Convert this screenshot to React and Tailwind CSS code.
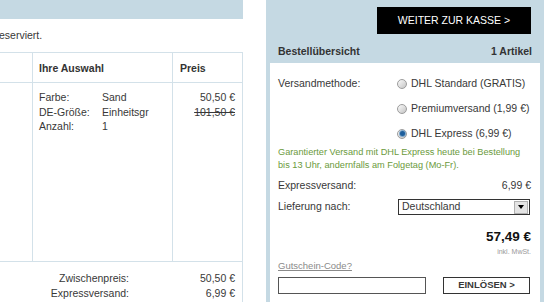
export default function App() {
  const radios = [
    { label: 'DHL Standard (GRATIS)', checked: false },
    { label: 'Premiumversand (1,99 €)', checked: false },
    { label: 'DHL Express (6,99 €)', checked: true },
  ];

  return (
    <div className="w-[550px] h-[302px] overflow-hidden flex bg-white text-[#383838] text-[10.5px] font-['Liberation_Sans',Arial,sans-serif]">
      {/* left: warenkorb */}
      <div className="w-[243px] shrink-0 flex flex-col">
        <div className="h-[19px] bg-[#c5d9e3]" />
        <p className="mt-[10px] leading-[13px] -ml-[1px]">eserviert.</p>
        <div className="mt-[10px] flex flex-col flex-1 border-r border-[#d3e1e9]">
          <div className="flex border-t border-b border-[#d3e1e9] h-[31px] font-bold text-[#333]">
            <div className="w-[33px] border-r border-[#d3e1e9]" />
            <div className="w-[140px] border-r border-[#d3e1e9] pl-[6px] flex items-center pt-[2px]">Ihre Auswahl</div>
            <div className="flex-1 pl-[7px] flex items-center pt-[2px]">Preis</div>
          </div>
          <div className="flex border-b border-[#d3e1e9] h-[179px] leading-[14.5px]">
            <div className="w-[33px] border-r border-[#d3e1e9]" />
            <div className="w-[140px] border-r border-[#d3e1e9] pl-[6px] pt-[7px]">
              {[
                ['Farbe:', 'Sand'],
                ['DE-Größe:', 'Einheitsgr'],
                ['Anzahl:', '1'],
              ].map(([k, v]) => (
                <div key={k} className="flex">
                  <span className="w-[63px]">{k}</span>
                  <span>{v}</span>
                </div>
              ))}
            </div>
            <div className="flex-1 pr-[7px] pt-[7px] text-right">
              <div>50,50 €</div>
              <div className="line-through">101,50 €</div>
            </div>
          </div>
          <div className="pt-[9px] leading-[14.5px]">
            {[
              ['Zwischenpreis:', '50,50 €'],
              ['Expressversand:', '6,99 €'],
            ].map(([k, v]) => (
              <div key={k} className="flex">
                <span className="w-[129px] text-right">{k}</span>
                <span className="flex-1 text-right pr-[7px]">{v}</span>
              </div>
            ))}
          </div>
        </div>
      </div>

      <div className="w-[23px] shrink-0" />

      {/* right: bestellübersicht */}
      <div className="w-[278px] shrink-0 bg-[#c5d9e3] px-[4px] flex flex-col">
        <div className="pt-[7px] flex justify-end pr-[9px]">
          <button className="w-[154px] h-[27px] bg-black text-white text-[10.5px] flex items-center justify-center">
            WEITER ZUR KASSE &gt;
          </button>
        </div>
        <div className="h-[29px] pt-[7px] flex items-center justify-between px-[8px] font-bold text-[#333]">
          <span>Bestellübersicht</span>
          <span>1 Artikel</span>
        </div>
        <div className="flex-1 bg-white px-[8px] pt-[8px]">
          <div className="flex">
            <div className="w-[119px] h-[25px] flex items-center">Versandmethode:</div>
            <div className="flex flex-col">
              {radios.map((r) => (
                <label key={r.label} className="h-[25px] flex items-center gap-[4px]">
                  <span className="w-[10px] h-[10px] rounded-full border border-[#9c9c9c] bg-linear-to-br from-[#fbfbfb] to-[#c4c4c4] flex items-center justify-center">
                    {r.checked && <span className="w-[5px] h-[5px] rounded-full bg-[#1d5e9c] ring-1 ring-[#7fa7c9]" />}
                  </span>
                  <span>{r.label}</span>
                </label>
              ))}
            </div>
          </div>
          <p className="text-[9.2px] leading-[13px] text-[#6b9a3c]">
            Garantierter Versand mit DHL Express heute bei Bestellung
            <br />
            bis 13 Uhr, andernfalls am Folgetag (Mo-Fr).
          </p>
          <div className="mt-[7px] flex justify-between leading-[13px] pr-[1px]">
            <span>Expressversand:</span>
            <span>6,99 €</span>
          </div>
          <div className="mt-[7px] flex items-center">
            <span className="w-[120px]">Lieferung nach:</span>
            <div className="w-[132px] h-[16px] border border-[#333] flex items-center">
              <span className="flex-1 pl-[3px]">Deutschland</span>
              <span className="w-[14px] h-[13px] mr-[1px] border border-[#b0b0b0] bg-[#e4e4e4] flex items-center justify-center">
                <span className="w-0 h-0 border-l-[3px] border-r-[3px] border-t-[4px] border-l-transparent border-r-transparent border-t-black" />
              </span>
            </div>
          </div>
          <div className="mt-[14px] text-right pr-[1px]">
            <div className="text-[13.5px] font-bold leading-[16px] text-[#111]">57,49 €</div>
            <div className="text-[7px] leading-[10px] mt-[2px] text-[#999]">inkl. MwSt.</div>
          </div>
          <a className="block mt-[3px] text-[9.5px] leading-[12px] text-[#8a8a8a] underline">Gutschein-Code?</a>
          <div className="mt-[5px] flex justify-between pr-[2px]">
            <input className="w-[148px] h-[17px] border border-[#555] bg-white" />
            <button className="w-[87px] h-[17px] border border-[#333] bg-white text-[9.5px] font-bold flex items-center justify-center">
              EINLÖSEN &gt;
            </button>
          </div>
        </div>
      </div>
      <div className="flex-1" />
    </div>
  );
}
